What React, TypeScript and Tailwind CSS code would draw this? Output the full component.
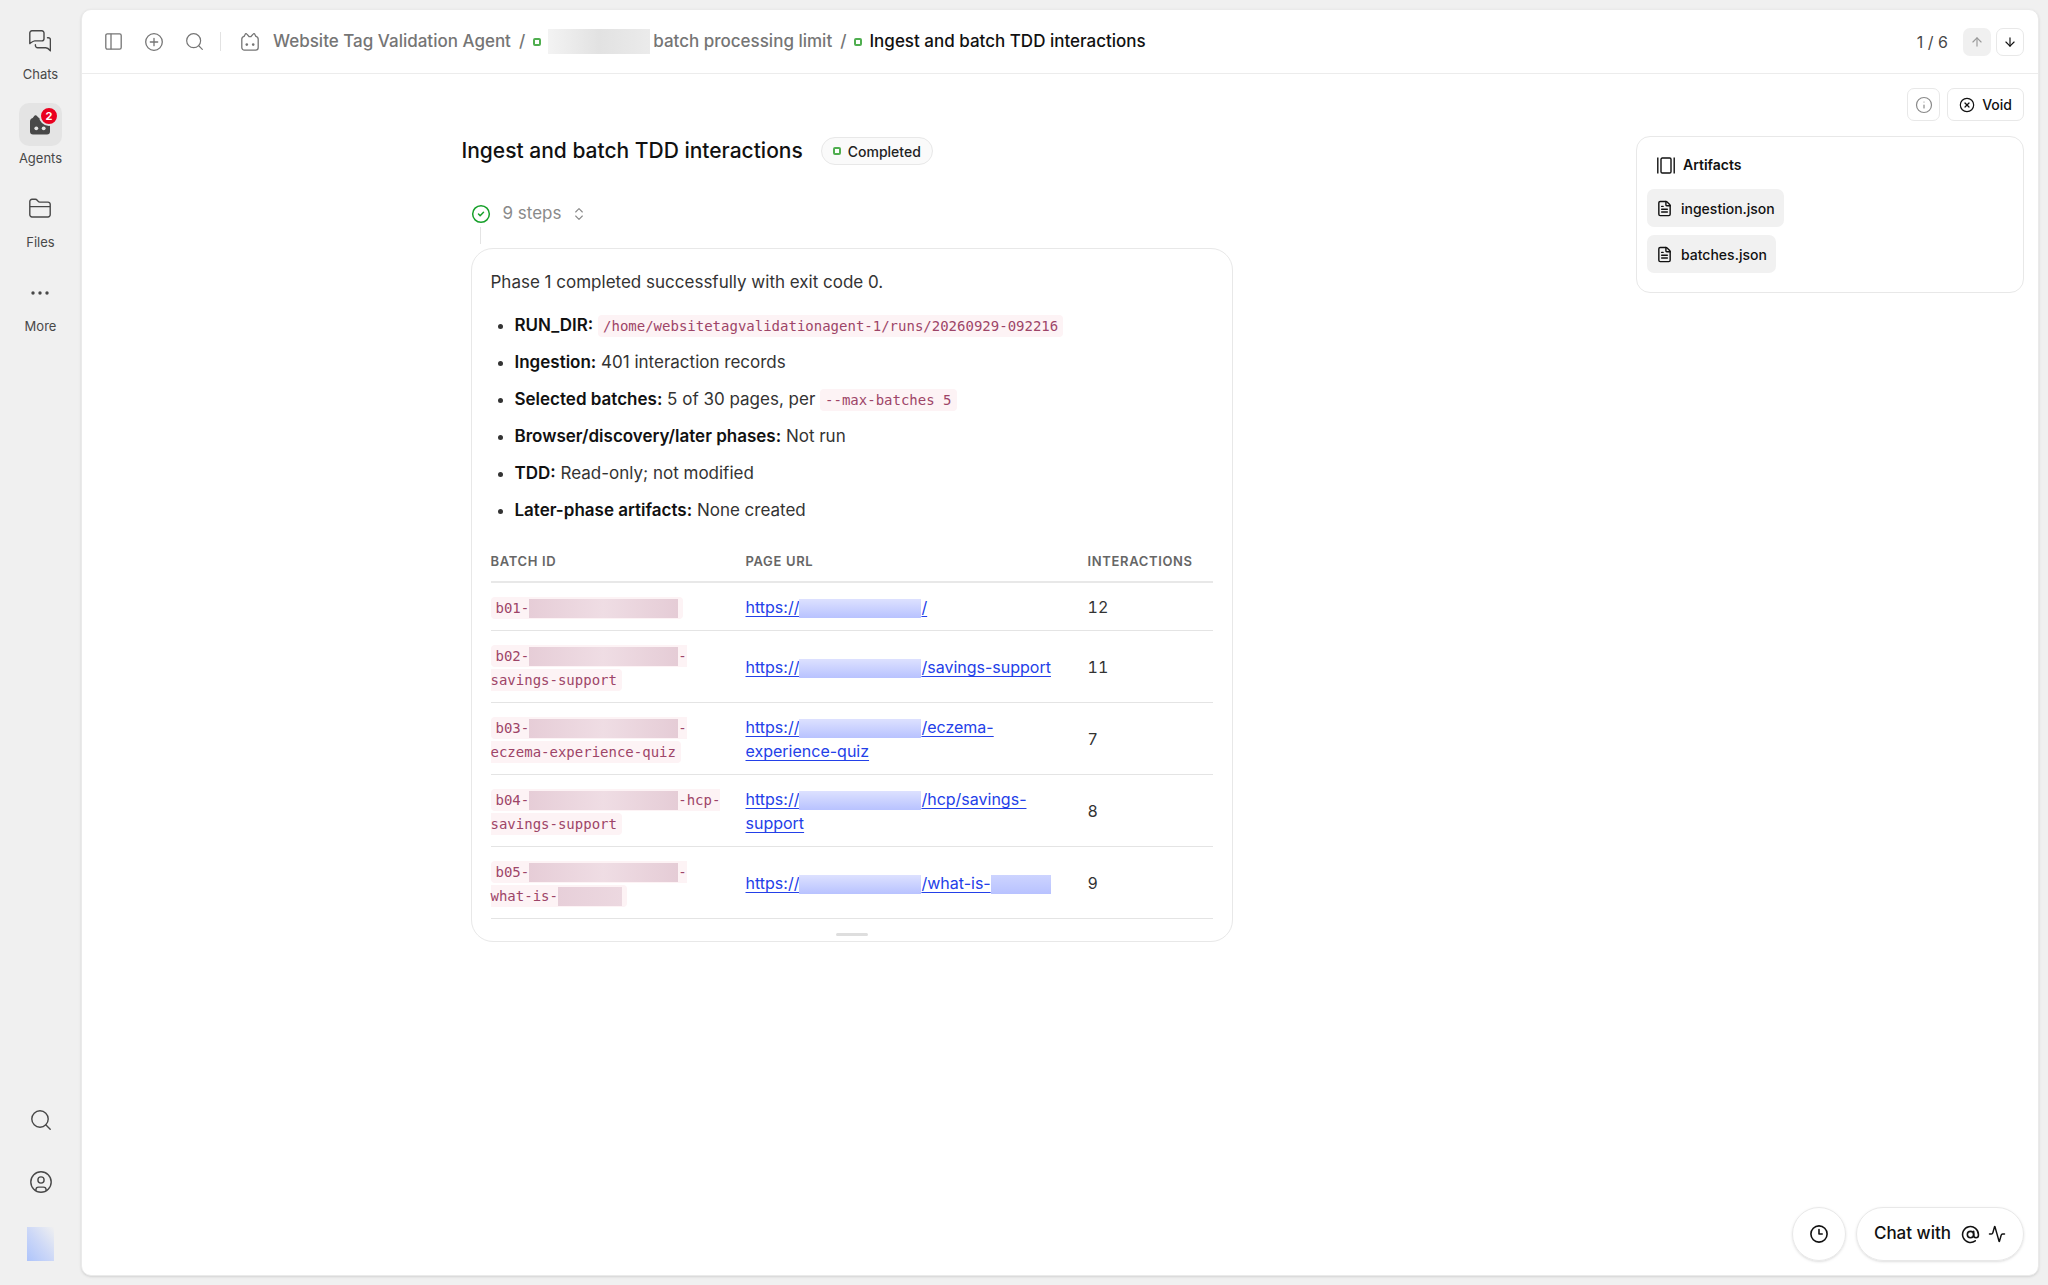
import { Activity, ArrowDown, ArrowUp, AtSign, CircleCheck, CircleX, ChevronsUpDown, FileText, Info } from 'lucide-react';
import type { ReactNode } from 'react';

type Batch = {
    id: string;
    idTail: string;
    idMasked?: boolean;
    urlTail: string;
    urlMasked?: boolean;
    interactions: number;
};

const batches: Batch[] = [
    { id: 'b01-', idTail: '', urlTail: '/', interactions: 12 },
    { id: 'b02-', idTail: '-savings-support', urlTail: '/savings-support', interactions: 11 },
    { id: 'b03-', idTail: '-eczema-experience-quiz', urlTail: '/eczema-experience-quiz', interactions: 7 },
    { id: 'b04-', idTail: '-hcp-savings-support', urlTail: '/hcp/savings-support', interactions: 8 },
    { id: 'b05-', idTail: '-what-is-', idMasked: true, urlTail: '/what-is-', urlMasked: true, interactions: 9 },
];

const artifacts = ['ingestion.json', 'batches.json'];

function ChatsIcon() {
    return (
        <svg width="22" height="22" viewBox="0 0 22 22" fill="none" stroke="currentColor" strokeWidth="1.4" strokeLinejoin="round" strokeLinecap="round">
            <path d="M.8 13.6V2.9A2.1 2.1 0 0 1 2.9.8h10a2.1 2.1 0 0 1 2.1 2.1v5.9a2.1 2.1 0 0 1-2.1 2.1H5.8c-1.7 0-2.6.8-5 2.7z" />
            <path d="M18.5 7.7h.8a2.1 2.1 0 0 1 2.1 2.1v11c-1.9-2.3-2.9-3.1-4.6-3.1H8.6a2.2 2.2 0 0 1-2.2-2.2v-.8" />
        </svg>
    );
}

function BotIcon() {
    return (
        <svg width="18" height="18" viewBox="0 0 18 18" fill="none" stroke="currentColor" strokeWidth="1.3" strokeLinejoin="round">
            <path d="M.8 6.2c0-1.500.8-2.500 2.300-2.800L4.200 1.300c.3-.7 1.200-.8 1.700-.2L8.200 3.700h1.600l2.300-2.600c.5-.6 1.400-.5 1.700.2l1.100 2.100c1.500.3 2.300 1.300 2.300 2.800v8.300a2.600 2.600 0 0 1-2.600 2.600H3.400a2.600 2.600 0 0 1-2.600-2.600z" />
            <circle cx="5.8" cy="11.6" r="1.3" fill="currentColor" stroke="none" />
            <circle cx="12.2" cy="11.6" r="1.3" fill="currentColor" stroke="none" />
        </svg>
    );
}

function BotFilledIcon() {
    return (
        <svg width="20" height="20" viewBox="0 0 20 20" fill="currentColor">
            <path d="M0 6.500c0-2 1-2.800 2.700-3.600L4.400.8C4.800 0 5.800 0 6.400.5L9 2.900h2L13.600.5c.6-.5 1.600-.5 2 .3l1.700 2.100C19 3.700 20 4.500 20 6.500v10a3 3 0 0 1-3 3H3a3 3 0 0 1-3-3z" />
            <circle cx="6.3" cy="13.3" r="1.9" fill="#e4e4e4" />
            <circle cx="13.7" cy="13.3" r="1.9" fill="#e4e4e4" />
        </svg>
    );
}

function FolderIcon() {
    return (
        <svg width="22" height="22" viewBox="0 0 22 22" fill="none" stroke="currentColor" strokeWidth="1.4" strokeLinejoin="round">
            <path d="M.8 3.500A2.200 2.200 0 0 1 3 1.300h3.400c.8 0 1.300.3 1.800.9l1 1.200c.4.500.9.700 1.500.700H19a2.200 2.200 0 0 1 2.200 2.200v10.500a2.200 2.200 0 0 1-2.200 2.200H3a2.200 2.200 0 0 1-2.200-2.200zM.8 8.600h20.400" />
        </svg>
    );
}

function DotsIcon() {
    return (
        <svg width="18" height="4" viewBox="0 0 18 4" fill="currentColor">
            <circle cx="2" cy="2" r="1.7" />
            <circle cx="9" cy="2" r="1.7" />
            <circle cx="16" cy="2" r="1.7" />
        </svg>
    );
}

function SearchIcon({ className }: { className: string }) {
    return (
        <svg className={className} viewBox="0 0 20 20" fill="none" stroke="currentColor" strokeWidth="1.4" strokeLinecap="round">
            <circle cx="9" cy="9" r="8.2" />
            <path d="m15 15 4.200 4.200" />
        </svg>
    );
}

function UserIcon() {
    return (
        <svg width="22" height="22" viewBox="0 0 22 22" fill="none" stroke="currentColor" strokeWidth="1.4">
            <circle cx="11" cy="11" r="10.2" />
            <circle cx="11" cy="9" r="3.1" />
            <path d="M5.9 19.600v-.8c0-1.700 1-2.700 2.700-2.700h4.800c1.700 0 2.700 1 2.700 2.700v.8" />
        </svg>
    );
}

function PanelIcon() {
    return (
        <svg width="17" height="17" viewBox="0 0 17 17" fill="none" stroke="currentColor" strokeWidth="1.3">
            <rect x=".8" y=".8" width="15.4" height="15.4" rx="1.6" />
            <path d="M6 .8v15.400" />
        </svg>
    );
}

function PlusCircleIcon() {
    return (
        <svg width="18" height="18" viewBox="0 0 18 18" fill="none" stroke="currentColor" strokeWidth="1.3" strokeLinecap="round">
            <circle cx="9" cy="9" r="8.3" />
            <path d="M9 5.300v7.400M5.300 9h7.400" />
        </svg>
    );
}

function ArtifactsIcon() {
    return (
        <svg width="18" height="17" viewBox="0 0 18 17" fill="none" stroke="currentColor" strokeWidth="1.4">
            <rect x="4" y="1" width="10" height="15" rx="1.3" />
            <path d="M.8.5v16M17.200.5v16" />
        </svg>
    );
}

function ClockIcon() {
    return (
        <svg width="18" height="18" viewBox="0 0 18 18" fill="none" stroke="currentColor" strokeWidth="1.6" strokeLinecap="round" strokeLinejoin="round">
            <circle cx="9" cy="9" r="8.1" />
            <path d="M9 4.600V9h3.200" />
        </svg>
    );
}

function StatusDot() {
    return <span className="size-2 shrink-0 rounded-[2px] border-2 border-[#4fae4f] bg-white" />;
}

function NavItem({ label, active, children }: { label: string; active?: boolean; children: ReactNode }) {
    return (
        <a href="#" className="flex flex-col items-center gap-[3px]">
            <span className={`relative flex size-[43px] items-center justify-center rounded-[10px] ${active ? 'bg-[#e4e4e4]' : ''}`}>
                {children}
            </span>
            <span className="text-[13px] leading-[18px]">{label}</span>
        </a>
    );
}

function Code({ children }: { children: ReactNode }) {
    return (
        <code className="rounded-[4px] bg-[#fdf3f5] px-[5px] py-[3px] font-['DejaVu_Sans_Mono',monospace] text-[14px] leading-none text-[#9d4568]">
            {children}
        </code>
    );
}

function Item({ label, children }: { label: string; children: ReactNode }) {
    return (
        <li>
            <strong className="font-semibold text-[#111]">{label}:</strong> {children}
        </li>
    );
}

function BatchRow({ batch }: { batch: Batch }) {
    return (
        <tr className="border-b border-[#e4e4e4]">
            <td className="pt-3 pr-5 pb-[11px]">
                <Code>
                    {batch.id}
                    <span className="mb-px inline-block h-[19px] w-[149px] bg-linear-to-r from-[#e6cdd7] via-[#efdde4] to-[#e5ccd6] align-bottom" />
                    {batch.idTail}
                    {batch.idMasked && <span className="mb-px inline-block h-[19px] w-16 bg-linear-to-r from-[#e7cfd9] to-[#ecd8e0] align-bottom" />}
                </Code>
            </td>
            <td className="pt-3 pr-5 pb-[11px]">
                <a href="#" className="text-[#2340e8] underline underline-offset-[3px]">
                    https://
                    <span className="mb-px inline-block h-[19px] w-[122px] bg-linear-to-b from-[#dde1ff] to-[#b8c2ff] align-bottom" />
                    {batch.urlTail}
                    {batch.urlMasked && <span className="mb-px inline-block h-[19px] w-[60px] bg-linear-to-b from-[#cdd4ff] to-[#b8c2ff] align-bottom" />}
                </a>
            </td>
            <td className="pt-3 pb-[11px] tabular-nums">{batch.interactions}</td>
        </tr>
    );
}

export default function App() {
    return (
        <div className="flex min-h-screen bg-[#f0f0f0] font-['Inter',sans-serif] text-[#333]">
            {/* App navigation */}
            <nav className="flex w-[81px] shrink-0 flex-col items-center pt-[19px] pb-6 text-[#484848]">
                <div className="flex flex-col gap-5">
                    <NavItem label="Chats">
                        <ChatsIcon />
                    </NavItem>
                    <NavItem label="Agents" active>
                        <BotFilledIcon />
                        <span className="absolute top-[3px] right-[3px] flex size-5 items-center justify-center rounded-full border-2 border-[#e4e4e4] bg-[#ea001f] text-[11px] font-bold text-white">
                            2
                        </span>
                    </NavItem>
                    <NavItem label="Files">
                        <FolderIcon />
                    </NavItem>
                    <NavItem label="More">
                        <DotsIcon />
                    </NavItem>
                </div>
                <div className="mt-auto flex flex-col items-center">
                    <button type="button" aria-label="Search" className="flex h-[62px] items-center">
                        <SearchIcon className="size-5" />
                    </button>
                    <button type="button" aria-label="Account" className="flex h-[62px] items-center">
                        <UserIcon />
                    </button>
                    <span className="mt-[14px] h-[34px] w-[27px] bg-linear-to-tr from-[#aec4fb] via-[#cdd8f7] to-[#f0f0f0]" />
                </div>
            </nav>

            <main className="my-[9px] mr-[9px] flex min-w-0 flex-1 flex-col rounded-[10px] border border-[#eaeaea] bg-white shadow-sm">
                {/* Breadcrumb bar */}
                <header className="flex h-16 items-center border-b border-[#ececec] pr-[14px] pl-[23px] text-[17px] text-[#757575]">
                    <div className="flex items-center gap-[23px]">
                        <button type="button" aria-label="Toggle sidebar">
                            <PanelIcon />
                        </button>
                        <button type="button" aria-label="New">
                            <PlusCircleIcon />
                        </button>
                        <button type="button" aria-label="Search">
                            <SearchIcon className="size-[17px]" />
                        </button>
                    </div>
                    <span className="mx-[17px] h-[19px] w-px bg-[#e2e2e2]" />
                    <div className="flex items-center gap-2 pl-[3px] font-medium">
                        <a href="#" className="flex items-center gap-[14px]">
                            <BotIcon />
                            Website Tag Validation Agent
                        </a>
                        <span>/</span>
                        <a href="#" className="flex items-center">
                            <StatusDot />
                            <span className="mr-[3px] ml-[7px] h-[25px] w-[102px] bg-linear-to-r from-[#f3f3f3] via-[#e2e2e2] to-[#ebebeb]" />
                            batch processing limit
                        </a>
                        <span>/</span>
                        <a href="#" className="flex items-center gap-[7px] text-[#111]">
                            <StatusDot />
                            Ingest and batch TDD interactions
                        </a>
                    </div>
                    <div className="ml-auto flex items-center gap-[5px]">
                        <span className="mr-[10px] text-[16px] text-[#484848]">1 / 6</span>
                        <button type="button" disabled aria-label="Previous" className="flex size-7 items-center justify-center rounded-[7px] bg-[#f0f0f0] text-[#999]">
                            <ArrowUp className="size-[14px]" />
                        </button>
                        <button type="button" aria-label="Next" className="flex size-7 items-center justify-center rounded-[7px] border border-[#e8e8e8] text-[#111]">
                            <ArrowDown className="size-[14px]" />
                        </button>
                    </div>
                </header>

                <div className="flex flex-1">
                    {/* Task result */}
                    <section className="min-w-0 flex-1">
                        <div className="mx-auto max-w-[782px] pt-[62px]">
                            <div className="flex items-center gap-[18px]">
                                <h1 className="text-[21px] leading-[30px] font-medium text-[#111]">Ingest and batch TDD interactions</h1>
                                <span className="flex h-7 items-center gap-[7px] rounded-full border border-[#e8e8e8] bg-[#fafafa] px-[11px] text-[14px] font-medium text-[#222]">
                                    <StatusDot />
                                    Completed
                                </span>
                            </div>

                            <div className="pt-9 pr-[11px] pl-[9px]">
                                <button type="button" className="flex h-6 items-center text-[17px] text-[#8a8a8a]">
                                    <CircleCheck className="size-5 text-[#17a02a]" strokeWidth={1.8} />
                                    <span className="ml-3">9 steps</span>
                                    <ChevronsUpDown className="ml-[9px] size-4" strokeWidth={1.7} />
                                </button>
                                <div className="mt-px mb-1 ml-[9px] h-[17px] w-px bg-[#e4e4e4]" />

                                <article className="rounded-[22px] border border-[#e8e8e8] px-[19px] text-[17px] leading-6">
                                    <p className="pt-[21px]">Phase 1 completed successfully with exit code 0.</p>
                                    <ul className="mt-[19px] flex list-disc flex-col gap-[13px] pl-6">
                                        <Item label="RUN_DIR">
                                            <Code>/home/websitetagvalidationagent-1/runs/20260929-092216</Code>
                                        </Item>
                                        <Item label="Ingestion">401 interaction records</Item>
                                        <Item label="Selected batches">
                                            5 of 30 pages, per <Code>--max-batches 5</Code>
                                        </Item>
                                        <Item label="Browser/discovery/later phases">Not run</Item>
                                        <Item label="TDD">Read-only; not modified</Item>
                                        <Item label="Later-phase artifacts">None created</Item>
                                    </ul>

                                    <table className="mt-[27px] w-full table-fixed text-left text-[16px]">
                                        <thead>
                                            <tr className="border-b-2 border-[#e8e8e8] text-[13px] tracking-wider text-[#666] uppercase">
                                                <th className="w-[255px] pb-2 font-semibold">Batch ID</th>
                                                <th className="w-[342px] pb-2 font-semibold">Page URL</th>
                                                <th className="pb-2 font-semibold">Interactions</th>
                                            </tr>
                                        </thead>
                                        <tbody>
                                            {batches.map((batch) => (
                                                <BatchRow key={batch.id} batch={batch} />
                                            ))}
                                        </tbody>
                                    </table>
                                    <div className="mx-auto mt-[14px] mb-[5px] h-[3px] w-8 rounded-full bg-[#dedede]" />
                                </article>
                            </div>
                        </div>
                    </section>

                    <aside className="flex w-[415px] shrink-0 flex-col items-end pt-[14px] pr-[14px] text-[#111]">
                        <div className="flex gap-[7px]">
                            <button type="button" aria-label="Details" className="flex size-[33px] items-center justify-center rounded-[7px] border border-[#e8e8e8] text-[#8a8a8a]">
                                <Info className="size-[18px]" strokeWidth={1.6} />
                            </button>
                            <button type="button" className="flex h-[33px] items-center gap-[7px] rounded-[7px] border border-[#e8e8e8] px-[11px] text-[14px] font-medium">
                                <CircleX className="size-4" strokeWidth={1.8} />
                                Void
                            </button>
                        </div>

                        <div className="mt-[15px] w-[388px] rounded-[14px] border border-[#e8e8e8] px-[10px] pt-[17px] pb-[19px]">
                            <h2 className="flex items-center gap-2 pl-[10px] text-[14px] leading-[22px] font-semibold">
                                <ArtifactsIcon />
                                Artifacts
                            </h2>
                            <div className="mt-[13px] flex flex-col items-start gap-2">
                                {artifacts.map((name) => (
                                    <a key={name} href="#" className="flex h-[38px] items-center gap-2 rounded-[7px] bg-[#f1f1f1] px-[9px] text-[14px] font-medium">
                                        <FileText className="size-[17px]" strokeWidth={2} />
                                        {name}
                                    </a>
                                ))}
                            </div>
                        </div>

                        {/* Chat launcher */}
                        <div className="mt-auto flex gap-[10px] pb-[14px]">
                            <button type="button" aria-label="History" className="flex size-[54px] items-center justify-center rounded-full border border-[#e8e8e8] shadow-sm">
                                <ClockIcon />
                            </button>
                            <button type="button" className="flex h-[54px] items-center rounded-full border border-[#e8e8e8] px-[17px] text-[17px] font-medium shadow-sm">
                                Chat with
                                <AtSign className="ml-[10px] size-[19px]" strokeWidth={2} />
                                <Activity className="ml-2 size-[18px]" strokeWidth={2} />
                            </button>
                        </div>
                    </aside>
                </div>
            </main>
        </div>
    );
}
